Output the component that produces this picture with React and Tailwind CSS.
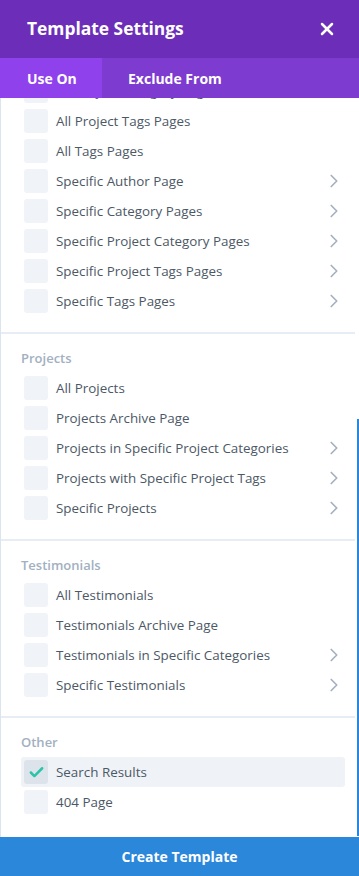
import { X, ChevronRight, Check } from "lucide-react";

const sections = [
  {
    title: null,
    items: [
      { label: "All Project Category Pages" },
      { label: "All Project Tags Pages" },
      { label: "All Tags Pages" },
      { label: "Specific Author Page", more: true },
      { label: "Specific Category Pages", more: true },
      { label: "Specific Project Category Pages", more: true },
      { label: "Specific Project Tags Pages", more: true },
      { label: "Specific Tags Pages", more: true },
    ],
  },
  {
    title: "Projects",
    items: [
      { label: "All Projects" },
      { label: "Projects Archive Page" },
      { label: "Projects in Specific Project Categories", more: true },
      { label: "Projects with Specific Project Tags", more: true },
      { label: "Specific Projects", more: true },
    ],
  },
  {
    title: "Testimonials",
    items: [
      { label: "All Testimonials" },
      { label: "Testimonials Archive Page" },
      { label: "Testimonials in Specific Categories", more: true },
      { label: "Specific Testimonials", more: true },
    ],
  },
  {
    title: "Other",
    items: [{ label: "Search Results", checked: true }, { label: "404 Page" }],
  },
];

const Row = ({ item }) => (
  <div
    className={
      "flex h-[30px] items-center rounded-[3px] pl-[3px] " +
      (item.checked ? "bg-[#eff3f7]" : "")
    }
  >
    <span
      className={
        "flex h-6 w-6 shrink-0 items-center justify-center rounded-[3px] " +
        (item.checked ? "bg-[#dde3ea]" : "bg-[#f0f3f7]")
      }
    >
      {item.checked && <Check size={17} strokeWidth={3.5} className="text-[#29c4a9]" />}
    </span>
    <span className="ml-2 flex-1 whitespace-nowrap text-[13.4px] font-medium leading-5 text-[#4c5866]">
      {item.label}
    </span>
    {item.more && (
      <ChevronRight size={22} strokeWidth={1.8} className="shrink-0 text-[#a3b0c1]" />
    )}
  </div>
);

export default function App() {
  return (
    <div className="flex h-[876px] w-[359px] flex-col overflow-hidden bg-white font-['Open_Sans',sans-serif]">
      <div className="flex h-[58px] shrink-0 items-center justify-between bg-[#6c2eb9] pl-[27px] pr-[22px]">
        <h1 className="text-[17.4px] font-bold leading-none text-white">Template Settings</h1>
        <X size={20} strokeWidth={3} className="text-white" />
      </div>
      <div className="flex h-[40px] shrink-0 bg-[#7e3bd0] text-[14px] font-bold text-white">
        <div className="flex w-[102px] items-center bg-[#8f42ec] pl-[27px]">Use On</div>
        <div className="flex items-center pl-[26px]">Exclude From</div>
      </div>
      <div className="relative min-h-0 flex-1 overflow-hidden border-l border-[#dce5ef]">
        <div className="mt-[-22px] w-[354px]">
          {sections.map((section, i) => (
            <div
              key={i}
              className={
                "pb-4 pl-[20px] pr-[10px] " +
                (i > 0 ? "border-t-2 border-[#e6edf5] pt-[14px]" : "")
              }
            >
              {section.title && (
                <div className="mb-[5px] h-5 text-[13px] font-semibold leading-5 text-[#a2b0c1]">
                  {section.title}
                </div>
              )}
              {section.items.map((item) => (
                <Row key={item.label} item={item} />
              ))}
            </div>
          ))}
        </div>
        <div className="absolute right-0 top-[321px] h-[417px] w-[2px] bg-[#2b87da]" />
      </div>
      <button className="flex h-[39px] shrink-0 items-center justify-center bg-[#2b87da] text-[14px] font-bold text-white">
        Create Template
      </button>
    </div>
  );
}
